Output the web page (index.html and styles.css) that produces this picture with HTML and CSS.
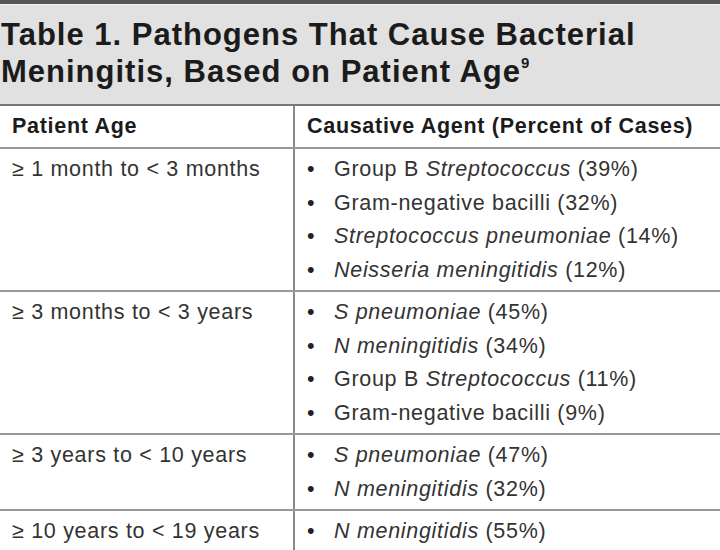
FILE: index.html
```html
<!DOCTYPE html>
<html>
<head>
<meta charset="utf-8">
<link rel="stylesheet" href="styles.css">
</head>
<body>
<div class="sheet">
  <h1 class="title">Table 1. Pathogens That Cause Bacterial<br>Meningitis, Based on Patient Age<sup>9</sup></h1>
  <table class="data">
    <colgroup><col class="c-age"><col class="c-agent"></colgroup>
    <thead>
      <tr><th>Patient Age</th><th class="agent">Causative Agent (Percent of Cases)</th></tr>
    </thead>
    <tbody>
      <tr>
        <td>≥ 1 month to &lt; 3 months</td>
        <td class="agent"><ul>
          <li>Group B <i>Streptococcus</i> (39%)</li>
          <li>Gram-negative bacilli (32%)</li>
          <li><i>Streptococcus pneumoniae</i> (14%)</li>
          <li><i>Neisseria meningitidis</i> (12%)</li>
        </ul></td>
      </tr>
      <tr>
        <td>≥ 3 months to &lt; 3 years</td>
        <td class="agent"><ul>
          <li><i>S pneumoniae</i> (45%)</li>
          <li><i>N meningitidis</i> (34%)</li>
          <li>Group B <i>Streptococcus</i> (11%)</li>
          <li>Gram-negative bacilli (9%)</li>
        </ul></td>
      </tr>
      <tr>
        <td>≥ 3 years to &lt; 10 years</td>
        <td class="agent"><ul>
          <li><i>S pneumoniae</i> (47%)</li>
          <li><i>N meningitidis</i> (32%)</li>
        </ul></td>
      </tr>
      <tr>
        <td>≥ 10 years to &lt; 19 years</td>
        <td class="agent"><ul>
          <li><i>N meningitidis</i> (55%)</li>
        </ul></td>
      </tr>
    </tbody>
  </table>
</div>
</body>
</html>
```
FILE: styles.css
```css
html, body {
  margin: 0;
  padding: 0;
  background: #fff;
}
.sheet {
  width: 720px;
  height: 550px;
  overflow: hidden;
  font-family: "Liberation Sans", Arial, sans-serif;
  color: #2a2a2a;
}
.title {
  margin: 0;
  border-top: 4px solid #555;
  box-shadow: inset 0 1px 0 #f4f4f4;
  background: #e1e1e1;
  border-bottom: 2px solid #777;
  padding: 12px 0 14px 1px;
  font-size: 31px;
  line-height: 37px;
  letter-spacing: 1px;
  font-weight: bold;
  color: #1b1b1b;
}
.title sup {
  font-size: 15px;
  line-height: 0;
  letter-spacing: 0;
  vertical-align: 14px;
}
.data {
  width: 720px;
  border-collapse: collapse;
  table-layout: fixed;
  font-size: 21.5px;
  letter-spacing: 0.7px;
}
.c-age { width: 294px; }
.data th, .data td {
  border-bottom: 2px solid #999;
  vertical-align: top;
  text-align: left;
  padding: 0 0 0 12px;
}
.data th + th, .data td + td {
  border-left: 2px solid #8a8a8a;
}
.data th {
  font-weight: bold;
  color: #1b1b1b;
  height: 41px;
  line-height: 41px;
}
.data td {
  line-height: 33.5px;
  padding-top: 4px;
  padding-bottom: 3px;
  color: #333;
}
.data ul {
  list-style: none;
  margin: 0;
  padding: 0;
}
.data li {
  padding-left: 27px;
  text-indent: -27px;
}
.data li::before {
  content: "•";
  display: inline-block;
  width: 27px;
  text-indent: 0;
  color: #222;
}
```
